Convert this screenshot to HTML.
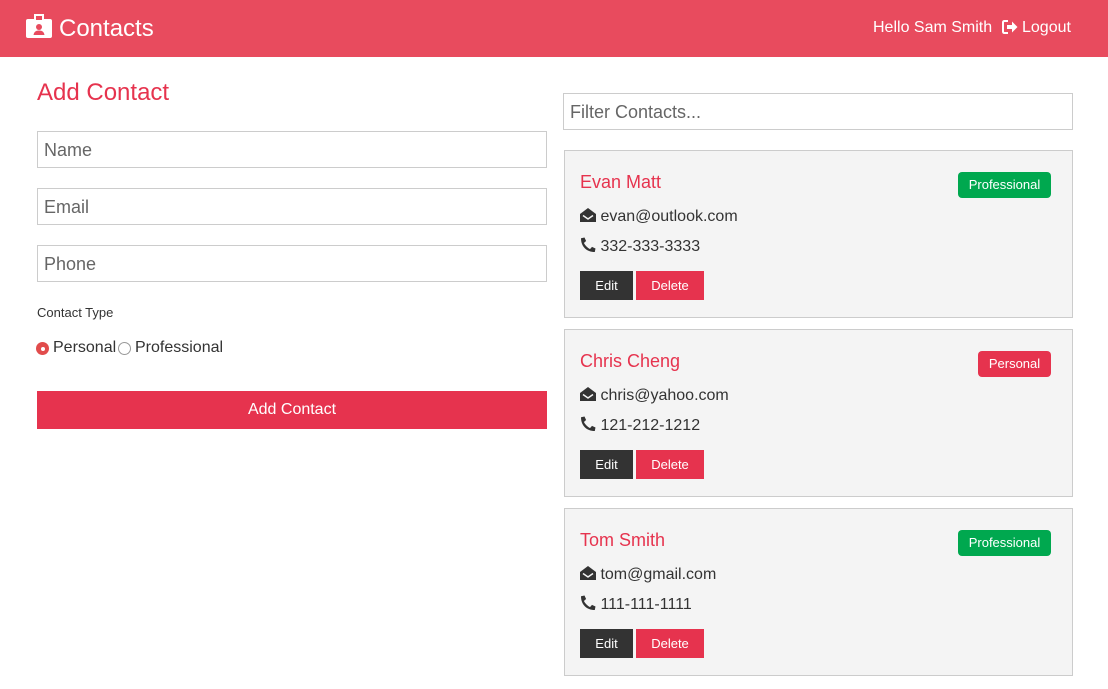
<!DOCTYPE html>
<html><head><meta charset="utf-8"><style>
*{box-sizing:border-box;margin:0;padding:0}
body{width:1108px;height:689px;background:#fff;font-family:"Liberation Sans",sans-serif;color:#333;position:relative;overflow:hidden}
.nav{position:absolute;left:0;top:0;width:1108px;height:57px;background:#e84b5e;color:#fff}
.abs{position:absolute}
.inp{position:absolute;border:1px solid #ccc;height:37px;font-size:18px;color:#666;padding-left:6px;line-height:37px;background:#fff}
.card{position:absolute;left:564px;width:509px;height:168px;background:#f4f4f4;border:1px solid #ccc}
.name{position:absolute;left:15px;top:21px;font-size:18px;color:#e6334e}
.badge{position:absolute;top:21px;height:26px;border-radius:4px;color:#fff;font-size:13px;line-height:26px;text-align:center}
.line{position:absolute;left:15px;font-size:16px;color:#333}
.btn{position:absolute;top:120px;height:29px;color:#fff;font-size:13px;line-height:29px;text-align:center}
svg{vertical-align:-2px}
</style></head><body>
<div class="nav">
<svg class="abs" style="left:26px;top:14px" width="26" height="24" viewBox="0 0 26 24"><rect x="0" y="5" width="26" height="19" rx="2" fill="#fff"/><rect x="8" y="0" width="10" height="8" fill="#fff"/><rect x="10" y="2" width="6" height="4" fill="#e84b5e"/><circle cx="13" cy="13" r="3" fill="#e84b5e"/><path d="M7.5 21 Q8 16.5 13 16.5 Q18 16.5 18.5 21 Z" fill="#e84b5e"/></svg>
<div class="abs" style="left:59px;top:15px;font-size:24px">Contacts</div>
<div class="abs" style="left:873px;top:19px;font-size:16px">Hello Sam Smith</div>
<svg class="abs" style="left:1002px;top:20px" width="16" height="14" viewBox="0 0 16 14"><path d="M6 1H2.5Q1 1 1 2.5v9Q1 13 2.5 13H6" stroke="#fff" stroke-width="2" fill="none"/><path d="M5 5h5V1.5L15.5 7 10 12.5V9H5z" fill="#fff"/></svg>
<div class="abs" style="left:1022px;top:19px;font-size:16px">Logout</div>
</div>

<div class="abs" style="left:37px;top:79px;font-size:24px;color:#e6334e">Add Contact</div>
<div class="inp" style="left:37px;top:131px;width:510px">Name</div>
<div class="inp" style="left:37px;top:188px;width:510px">Email</div>
<div class="inp" style="left:37px;top:245px;width:510px">Phone</div>
<div class="abs" style="left:37px;top:305px;font-size:13px">Contact Type</div>
<div class="abs" style="left:36px;top:342px;width:13px;height:13px;border-radius:50%;background:#e14c4c"><div style="position:absolute;left:4.5px;top:4.5px;width:4px;height:4px;border-radius:50%;background:#fff"></div></div>
<div class="abs" style="left:53px;top:339px;font-size:16px">Personal</div>
<div class="abs" style="left:118px;top:342px;width:13px;height:13px;border-radius:50%;border:1px solid #999;background:#fff"></div>
<div class="abs" style="left:135px;top:339px;font-size:16px">Professional</div>
<div class="abs" style="left:37px;top:391px;width:510px;height:38px;background:#e6334e;color:#fff;font-size:16px;line-height:38px;text-align:center">Add Contact</div>

<div class="inp" style="left:563px;top:93px;width:510px">Filter Contacts...</div>

<div class="card" style="top:150px">
<div class="name">Evan Matt</div>
<div class="badge" style="left:393px;width:93px;background:#00a84f">Professional</div>
<div class="line" style="top:57px"><svg width="16" height="15" viewBox="0 0 16 15"><path d="M0 6L8 0l8 6v8H0z" fill="#333"/><path d="M3 7.5l5 3.5 5-3.5" stroke="#f4f4f4" stroke-width="1.5" fill="none"/></svg> evan@outlook.com</div>
<div class="line" style="top:86px"><svg width="16" height="16" viewBox="0 0 16 16"><path d="M15.5 11.5l-3.5-1.6-2 2.2C7.5 10.8 5.2 8.5 3.9 6l2.2-2L4.5 0.5 1 1.2C1 9.5 6.5 15 14.8 15z" fill="#333"/></svg> 332-333-3333</div>
<div class="btn" style="left:15px;width:53px;background:#333">Edit</div>
<div class="btn" style="left:71px;width:68px;background:#e6334e">Delete</div>
</div>

<div class="card" style="top:329px">
<div class="name">Chris Cheng</div>
<div class="badge" style="left:413px;width:73px;background:#e6334e">Personal</div>
<div class="line" style="top:57px"><svg width="16" height="15" viewBox="0 0 16 15"><path d="M0 6L8 0l8 6v8H0z" fill="#333"/><path d="M3 7.5l5 3.5 5-3.5" stroke="#f4f4f4" stroke-width="1.5" fill="none"/></svg> chris@yahoo.com</div>
<div class="line" style="top:86px"><svg width="16" height="16" viewBox="0 0 16 16"><path d="M15.5 11.5l-3.5-1.6-2 2.2C7.5 10.8 5.2 8.5 3.9 6l2.2-2L4.5 0.5 1 1.2C1 9.5 6.5 15 14.8 15z" fill="#333"/></svg> 121-212-1212</div>
<div class="btn" style="left:15px;width:53px;background:#333">Edit</div>
<div class="btn" style="left:71px;width:68px;background:#e6334e">Delete</div>
</div>

<div class="card" style="top:508px">
<div class="name">Tom Smith</div>
<div class="badge" style="left:393px;width:93px;background:#00a84f">Professional</div>
<div class="line" style="top:57px"><svg width="16" height="15" viewBox="0 0 16 15"><path d="M0 6L8 0l8 6v8H0z" fill="#333"/><path d="M3 7.5l5 3.5 5-3.5" stroke="#f4f4f4" stroke-width="1.5" fill="none"/></svg> tom@gmail.com</div>
<div class="line" style="top:86px"><svg width="16" height="16" viewBox="0 0 16 16"><path d="M15.5 11.5l-3.5-1.6-2 2.2C7.5 10.8 5.2 8.5 3.9 6l2.2-2L4.5 0.5 1 1.2C1 9.5 6.5 15 14.8 15z" fill="#333"/></svg> 111-111-1111</div>
<div class="btn" style="left:15px;width:53px;background:#333">Edit</div>
<div class="btn" style="left:71px;width:68px;background:#e6334e">Delete</div>
</div>
</body></html>
